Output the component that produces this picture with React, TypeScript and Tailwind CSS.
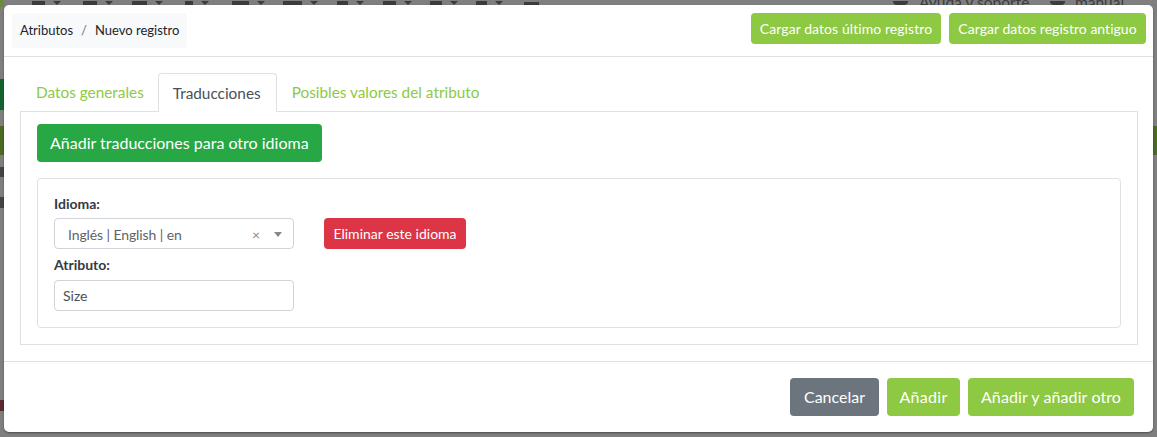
const Green = "bg-[#8dc942] text-white rounded-[4px]";

// menu of the page behind the modal, only its bottom edge shows above the dialog
const menuItems = [
  { group: "w-[51px]", icon: "w-[13px]" },
  { group: "w-[49px]", icon: "w-[14px]" },
  { group: "w-[53px]", icon: "w-[15px]" },
  { group: "w-[47px]", icon: "w-[8px]" },
  { group: "w-[51px]", icon: "w-[17px]" },
  { group: "w-[54px]", icon: "w-[19px]" },
  { group: "w-[46px]", icon: "w-[11px]" },
  { group: "w-[47px]", icon: "w-[13px]" },
  { group: "w-[46px]", icon: "w-[12px]" },
  { group: "w-[48px]", icon: "w-[11px]" },
];

const Backdrop = () => (
  <div className="absolute inset-0 overflow-hidden">
    <div className="flex h-[5px] items-end overflow-hidden pl-[32px]">
      {menuItems.map((item, i) => (
        <div key={i} className={`flex shrink-0 items-end gap-[8px] ${item.group}`}>
          <span className={`h-[4px] bg-[#3c3c3c] ${item.icon}`} />
          <span className="h-0 w-0 border-x-[4px] border-t-[4px] border-x-transparent border-t-[#3c3c3c]" />
        </div>
      ))}
      <span className="h-[3px] w-[15px] bg-[#3c3c3c]" />
      <div className="ml-[354px] flex h-[5px] shrink-0 items-end overflow-hidden text-[15.5px] leading-[5px] text-[#3c3c3c]">
        <span className="h-[4px] w-[15px] rounded-b-full bg-[#3c3c3c]" />
        <span className="ml-[11px] w-[110px] whitespace-nowrap">Ayuda y soporte</span>
        <span className="ml-[21px] h-[4px] w-[15px] rounded-b-full bg-[#3c3c3c]" />
        <span className="ml-[10px] whitespace-nowrap">manual</span>
      </div>
    </div>
    <div className="absolute top-0 left-0 flex w-[4px] flex-col">
      <span className="h-[7px] bg-[#6d8a3c]" />
      <span className="mt-[72px] h-[31px] bg-[#14632f]" />
      <span className="mt-[16px] h-[29px] bg-[#4a6b22]" />
      <span className="mt-[12px] h-[10px] bg-[#444444]" />
      <span className="mt-[20px] h-[11px] bg-[#444444]" />
      <span className="mt-[192px] h-[11px] bg-[#5b2a2e]" />
    </div>
    <div className="absolute top-0 right-0 flex w-[4px] flex-col">
      <span className="mt-[126px] h-[29px] bg-[#4a6b22]" />
    </div>
  </div>
);

export default function App() {
  return (
    <div className="relative h-[437px] w-[1157px] overflow-hidden bg-[#7f7f7f] pt-[5px] pl-[4px] font-['Lato',sans-serif]">
      <Backdrop />
      <div className="relative h-[427px] w-[1149px] rounded-[5px] bg-white text-[14px] text-[#212529] shadow-[0_1px_2px_rgba(0,0,0,0.4)]">
        <header className="flex h-[52px] items-start justify-between border-b border-[#dee2e6] pt-[8px] pr-[7px] pl-[8px]">
          <nav className="flex h-[35px] items-center rounded-[4px] bg-[#f8f9fa] px-[8px] text-[13px]">
            <span>Atributos</span>
            <span className="px-[8px] text-[#6c757d]">/</span>
            <span>Nuevo registro</span>
          </nav>
          <div className="flex gap-[8px]">
            <button className={`${Green} h-[31px] w-[190px] text-[14px] tracking-[0.07px]`}>Cargar datos último registro</button>
            <button className={`${Green} h-[31px] w-[197px] text-[14px] tracking-[0.03px]`}>Cargar datos registro antiguo</button>
          </div>
        </header>

        <div className="pt-[16px] pr-[15px] pl-[16px]">
          <div className="flex px-[1px] text-[15.35px] text-[#8dc942]">
            <button className="h-[38px] pt-[1px] pr-[14px] pl-[15px]">Datos generales</button>
            <button className="relative z-10 -mb-px h-[39px] rounded-t-[4px] border border-b-0 border-[#dee2e6] bg-white pt-[1px] pr-[15px] pl-[14px] text-[#495057]">
              Traducciones
            </button>
            <button className="h-[38px] px-[15px] pt-[1px]">Posibles valores del atributo</button>
          </div>
          <div className="h-[234px] border border-[#dee2e6] px-[16px] pt-[12px]">
            <button className="h-[38px] rounded-[4px] bg-[#28a745] px-[13px] text-[16px] text-white">
              Añadir traducciones para otro idioma
            </button>
            <section className="mt-[16px] h-[150px] rounded-[4px] border border-[#dee2e6] px-[16px] pt-[15px]">
              <div className="flex">
                <div className="w-[240px]">
                  <label className="block h-[24px] text-[14px] leading-[20px] font-bold text-[#343a40]">Idioma:</label>
                  <div className="flex h-[31px] items-center rounded-[4px] border border-[#ced4da] pt-[2px] pr-[11px] pl-[13px] text-[14px] text-[#5f6368]">
                    <span className="flex-1 tracking-[-0.1px]">Inglés | English | en</span>
                    <span className="mr-[14px] text-[14px] text-[#888888]">×</span>
                    <span className="h-0 w-0 border-x-[4px] border-t-[5px] border-x-transparent border-t-[#888888]" />
                  </div>
                  <label className="mt-[6px] block h-[25px] text-[14px] leading-[20px] font-bold text-[#343a40]">Atributo:</label>
                  <input
                    readOnly
                    value="Size"
                    className="h-[31px] w-full rounded-[4px] border border-[#ced4da] px-[8px] text-[14px] text-[#495057] outline-none"
                  />
                </div>
                <div className="ml-[30px] pt-[24px]">
                  <button className="h-[31px] w-[142px] rounded-[4px] bg-[#dc3545] text-[14px] text-white">
                    Eliminar este idioma
                  </button>
                </div>
              </div>
            </section>
          </div>
        </div>

        <footer className="mt-[16px] flex h-[71px] justify-end gap-[8px] border-t border-[#dee2e6] pt-[16px] pr-[19px] text-[16px] text-white">
          <button className="h-[38px] w-[89px] rounded-[4px] bg-[#6c757d]">Cancelar</button>
          <button className={`${Green} h-[38px] w-[73px] tracking-[0.3px]`}>Añadir</button>
          <button className={`${Green} h-[38px] w-[166px] tracking-[0.1px]`}>Añadir y añadir otro</button>
        </footer>
      </div>
    </div>
  );
}
